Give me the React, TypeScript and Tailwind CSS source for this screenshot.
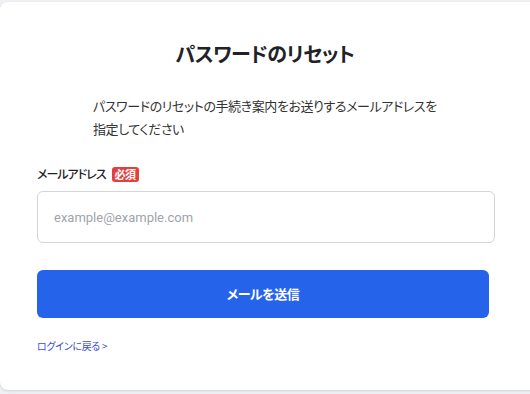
import React from "react";

export default function App() {
  const font = {
    fontFamily: '"Noto Sans CJK JP", "Noto Sans", sans-serif',
    fontFeatureSettings: '"palt"',
  } as React.CSSProperties;
  return (
    <div className="min-h-[394px] w-[530px] bg-[#eef0f3] pt-[2px] overflow-hidden" style={font}>
      <div className="h-[388px] w-[540px] rounded-lg bg-white shadow-sm">
        <div className="w-[530px] pt-[37px] px-[37px]">
          <h1 className="text-center text-[20px] font-bold leading-[30px] tracking-[-0.5px] text-[#1f2328]">
            パスワードのリセット
          </h1>
          <p className="mx-auto mt-[25px] w-[344px] whitespace-nowrap text-[13px] leading-[23px] tracking-[-0.4px] text-[#333]">
            パスワードのリセットの手続き案内をお送りするメールアドレスを
            <br />
            指定してください
          </p>
          <div className="mt-[25px] flex items-center gap-[6px]">
            <span className="text-[12px] font-medium leading-[18px] tracking-[-1px] text-[#1f2328]">メールアドレス</span>
            <span className="rounded-[3px] bg-[#e53e3e] px-[3px] text-[11px] font-bold leading-[15px] tracking-[-0.5px] text-white">
              必須
            </span>
          </div>
          <input
            className="mt-[8px] block h-[52px] w-[458px] rounded-md border border-[#d1d5db] px-[16px] text-[13px] text-[#333] placeholder:text-[#a0a4ab] outline-none"
            placeholder="example@example.com"
            style={{ fontFamily: '"Roboto", "Noto Sans", sans-serif' }}
          />
          <button className="mt-[27px] block h-[48px] w-[452px] rounded-md bg-[#2563eb] text-[13px] font-bold tracking-[-0.5px] text-white">
            メールを送信
          </button>
          <a className="mt-[20px] block text-[10px] leading-[16px] tracking-[-0.3px] text-[#3b4fd8]" href="#">
            ログインに戻る &gt;
          </a>
        </div>
      </div>
    </div>
  );
}
